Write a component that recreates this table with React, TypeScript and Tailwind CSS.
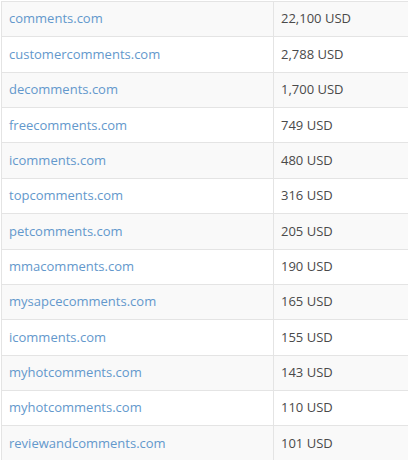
const rows: [string, string][] = [
  ["comments.com", "22,100 USD"],
  ["customercomments.com", "2,788 USD"],
  ["decomments.com", "1,700 USD"],
  ["freecomments.com", "749 USD"],
  ["icomments.com", "480 USD"],
  ["topcomments.com", "316 USD"],
  ["petcomments.com", "205 USD"],
  ["mmacomments.com", "190 USD"],
  ["mysapcecomments.com", "165 USD"],
  ["icomments.com", "155 USD"],
  ["myhotcomments.com", "143 USD"],
  ["myhotcomments.com", "110 USD"],
  ["reviewandcomments.com", "101 USD"],
];

export default function App() {
  return (
    <div className="h-[460px] w-[408px] overflow-hidden bg-white pt-px font-['Open_Sans',sans-serif] text-[13px]">
      <div className="ml-px w-[420px] border-l border-t border-[#e4e4e4]">
        {rows.map(([domain, price], i) => (
          <div
            key={i}
            className={`flex h-[35.36px] items-center border-b border-[#e4e4e4] ${
              i % 2 === 0 ? "bg-[#f9f9f9]" : "bg-white"
            }`}
          >
            <div className="flex h-full w-[272px] items-center border-r border-[#e4e4e4] pl-[7px]">
              <a href="#" className="text-[#6398cc]">
                {domain}
              </a>
            </div>
            <div className="pl-[7px] text-[#4a4a4a]">{price}</div>
          </div>
        ))}
      </div>
    </div>
  );
}
